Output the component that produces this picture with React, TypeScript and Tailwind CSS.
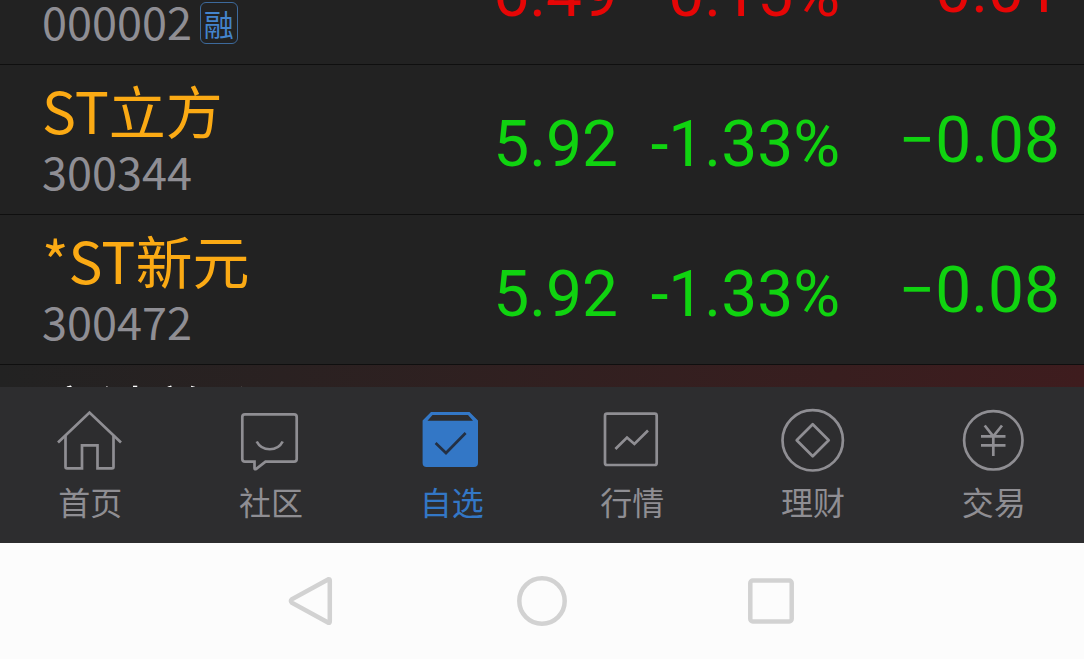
import type { ReactNode } from "react";

interface Stock {
  name: string;
  code: string;
  price: string;
  percent: string;
  change: string;
  trend: "up" | "down";
  margin?: boolean;      // shows the 融 badge
  owned?: boolean;       // orange name
  flash?: boolean;       // red glow after a price tick
}

const STOCKS: Stock[] = [
  { name: "万科A", code: "000002", price: "6.49", percent: "0.15%", change: "0.01", trend: "up", margin: true },
  { name: "ST立方", code: "300344", price: "5.92", percent: "-1.33%", change: "−0.08", trend: "down", owned: true },
  { name: "*ST新元", code: "300472", price: "5.92", percent: "-1.33%", change: "−0.08", trend: "down", owned: true },
  { name: "宁波韵升", code: "600366", price: "6.49", percent: "0.15%", change: "0.01", trend: "up", flash: true },
];

function StockRow({ stock }: { stock: Stock }) {
  const color = stock.trend === "up" ? "text-[#e60606]" : "text-[#10d310]";
  return (
    <tr className={`h-[150px] ${stock.flash ? "bg-linear-to-r from-[#222222] to-[#3e1c1e]" : ""}`}>
      <th scope="row" className="border-b border-[#0f0f0f] pt-3 pl-[42px] text-left align-top font-normal">
        <div className={`text-[57px] leading-[64px] whitespace-nowrap ${stock.owned ? "text-[#fbaa14]" : "text-white"}`}>{stock.name}</div>
        <div className="flex items-center gap-2 text-[45px] leading-[60px] text-[#8f8e94]">
          {stock.code}
          {stock.margin && (
            <span className="mt-1 flex h-[42px] w-[38px] items-center justify-center rounded-md border border-[#3d6a9c] text-[30px] leading-[40px] text-[#4484cc]">融</span>
          )}
        </div>
      </th>
      <td className={`border-b border-[#0f0f0f] pt-11 text-right align-top font-[Roboto,sans-serif] text-[64px] leading-[72px] ${color}`}>{stock.price}</td>
      <td className={`border-b border-[#0f0f0f] pt-11 text-right align-top font-[Roboto,sans-serif] text-[64px] leading-[72px] ${color}`}>{stock.percent}</td>
      <td className={`border-b border-[#0f0f0f] pt-10 pr-6 text-right align-top font-[Roboto,sans-serif] text-[64px] leading-[72px] ${color}`}>{stock.change}</td>
    </tr>
  );
}

function TabIcon({ children }: { children: ReactNode }) {
  return (
    <svg viewBox="0 0 64 64" className="size-16 overflow-visible" fill="none" stroke="currentColor" strokeWidth="2.7" aria-hidden="true">
      {children}
    </svg>
  );
}

const TABS: { label: string; icon: ReactNode }[] = [
  {
    label: "首页",
    icon: (
      <>
        <path d="M0 34.5 31.5 4.5 63 34.5" />
        <path d="M7.5 28V59Q7.5 60.3 9 60.3H24V37.3H39.5V60.3H54Q55.5 60.3 55.5 59V28" />
      </>
    ),
  },
  {
    label: "社区",
    icon: (
      <>
        <path d="M6 6.3H55Q57.7 6.3 57.7 9V51Q57.7 53.7 55 53.7H26.5L17 61Q15.5 61.8 15.5 60V53.7H6Q3.3 53.7 3.3 51V9Q3.3 6.3 6 6.3Z" />
        <path d="M17.7 33.5C23 43.8 38.5 43.8 43.7 33.5" />
      </>
    ),
  },
  {
    label: "自选",
    icon: (
      <>
        <path fillRule="evenodd" fill="currentColor" stroke="none" d="M11 4H49.5L58 12.5V55Q58 59 54 59H6.6Q2.6 59 2.6 55V12.5ZM12.5 7 7.5 12.7H53L48 7Z" />
        <path d="M15.6 35 26 45 45.6 25" stroke="#243043" />
      </>
    ),
  },
  {
    label: "行情",
    icon: (
      <>
        <rect x="5" y="5.7" width="51.7" height="51.3" rx="2" />
        <path d="M15.4 41 27 29.5 34.4 36 48 22.5" />
      </>
    ),
  },
  {
    label: "理财",
    icon: (
      <>
        <circle cx="31.7" cy="32.3" r="30.2" />
        <path strokeLinejoin="round" d="M31.7 16.3 47.7 32.3 31.7 48.3 15.7 32.3Z" />
      </>
    ),
  },
  {
    label: "交易",
    icon: (
      <>
        <circle cx="31.3" cy="32.3" r="29.2" />
        <path d="M22.7 17.5 31.3 28.3 40 17.5M19 28.3H43.5M19 37.3H43.5M31.3 28V48" />
      </>
    ),
  },
];

const NAV_KEYS = [
  { label: "返回", shape: <path d="M40.5 3.2 3.8 23.4Q2.2 25 3.8 26.6L40.5 46.8Q41.8 47 41.8 45.5V4.5Q41.8 3 40.5 3.2Z" /> },
  { label: "主屏幕", shape: <circle cx="25" cy="25" r="22.7" /> },
  { label: "最近任务", shape: <rect x="4.3" y="4.5" width="41.4" height="41" rx="2.5" /> },
];

export default function App() {
  const active = "自选";

  return (
    <div className="flex h-screen flex-col overflow-hidden bg-[#222222] font-['Noto_Sans_CJK_SC',sans-serif]">
      <main className="min-h-0 flex-1 overflow-hidden">
        {/* list is scrolled part-way into its first row */}
        <table className="-mt-[85px] w-full table-fixed border-separate border-spacing-0">
          <colgroup>
            <col />
            <col className="w-[140px]" />
            <col className="w-[222px]" />
            <col className="w-[244px]" />
          </colgroup>
          <tbody>
            {STOCKS.map((s) => <StockRow key={s.code} stock={s} />)}
          </tbody>
        </table>
      </main>

      <nav className="grid h-[156px] shrink-0 grid-cols-6 bg-[#2d2d2f]">
        {TABS.map((t) => (
          <button key={t.label} className={`flex flex-col items-center gap-2 pt-[21px] ${t.label === active ? "text-[#3377c6]" : "text-[#8f8e93]"}`}>
            <TabIcon>{t.icon}</TabIcon>
            <span className="text-[32px] leading-[42px]">{t.label}</span>
          </button>
        ))}
      </nav>

      <div className="flex h-[116px] shrink-0 items-center justify-center gap-[179px] bg-[#fcfcfc]">
        {NAV_KEYS.map((k) => (
          <button key={k.label} aria-label={k.label}>
            <svg viewBox="0 0 50 50" className="size-[50px]" fill="none" stroke="#d2d2d2" strokeWidth="4.5" aria-hidden="true">
              {k.shape}
            </svg>
          </button>
        ))}
      </div>
    </div>
  );
}
